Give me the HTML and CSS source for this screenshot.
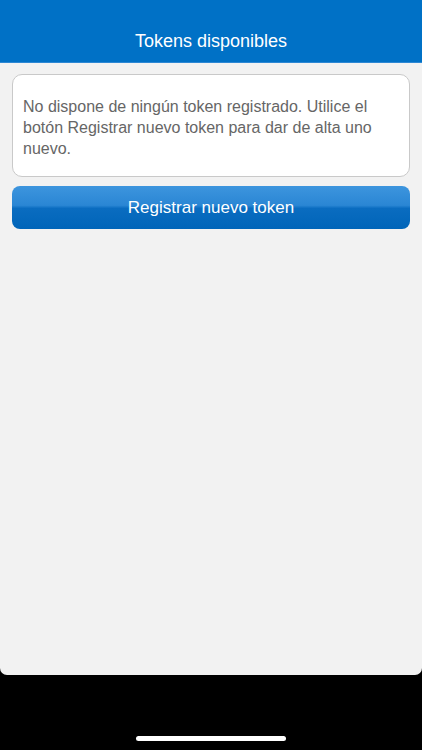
FILE: index.html
```html
<!DOCTYPE html>
<html lang="es">
<head>
    <meta charset="UTF-8">
    <meta name="viewport" content="width=device-width, initial-scale=1.0">
    <title>Tokens disponibles</title>
    <link rel="stylesheet" href="styles.css">
</head>
<body>
    <div class="screen">
        <header class="top-bar">
            <h1>Tokens disponibles</h1>
        </header>

        <main class="content">
            <div class="notice">
                <p>No dispone de ningún token registrado. Utilice el botón Registrar nuevo token para dar de alta uno nuevo.</p>
            </div>
            <button type="button" class="btn-primary">Registrar nuevo token</button>
        </main>

        <div class="home-area">
            <span class="home-indicator"></span>
        </div>
    </div>
</body>
</html>
```

FILE: styles.css
```css
* {
    box-sizing: border-box;
}

body {
    margin: 0;
    background-color: #000;
    font-family: "Liberation Sans", Arial, sans-serif;
}

.screen {
    display: flex;
    flex-direction: column;
    width: 422px;
    height: 750px;
}

.top-bar {
    height: 63px;
    padding-top: 21px;
    background-color: #0071c6;
    border-bottom: 1px solid #2d88d4;
}

.top-bar h1 {
    margin: 0;
    height: 41px;
    line-height: 41px;
    text-align: center;
    color: #fff;
    font-size: 18px;
    font-weight: normal;
}

.content {
    flex: 1;
    padding: 11px 12px;
    background-color: #f2f2f2;
    border-radius: 0 0 7px 7px;
}

.notice {
    padding: 21px 10px 17px;
    background-color: #fff;
    border: 1px solid #c9c9c9;
    border-radius: 10px;
}

.notice p {
    margin: 0;
    color: #666;
    font-size: 16px;
    line-height: 21px;
}

.btn-primary {
    display: block;
    width: 100%;
    height: 43px;
    margin-top: 9px;
    padding: 0;
    border: none;
    border-radius: 8px;
    background: linear-gradient(to bottom, #3d95de 0%, #2a86d4 45%, #0a6cc0 52%, #0065b9 100%);
    color: #fff;
    font-family: inherit;
    font-size: 17px;
    cursor: pointer;
}

.home-area {
    display: flex;
    justify-content: center;
    align-items: flex-end;
    height: 75px;
    padding-bottom: 9px;
}

.home-indicator {
    width: 150px;
    height: 5px;
    border-radius: 3px;
    background-color: #fff;
}
```
